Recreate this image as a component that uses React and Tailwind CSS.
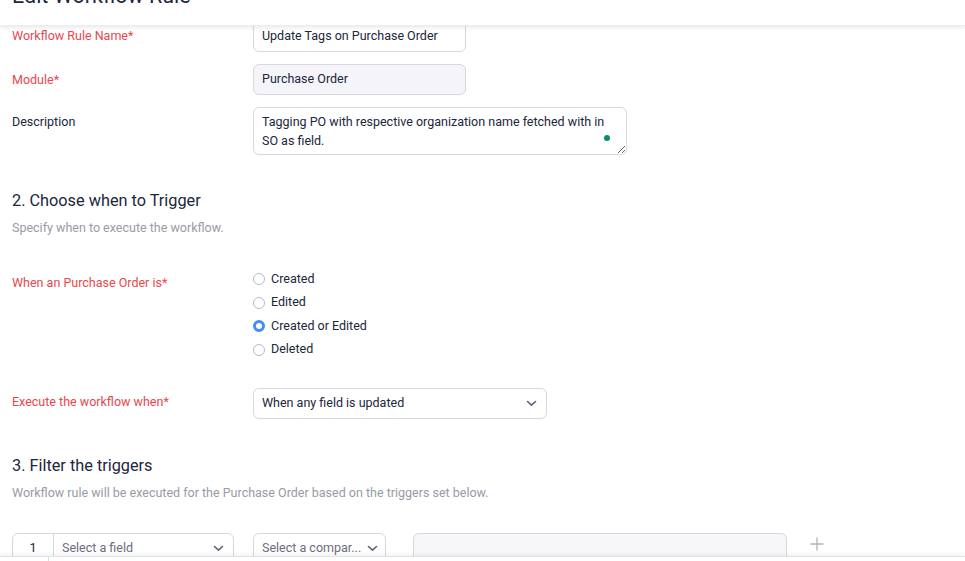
import React from 'react';

const Chevron = ({ className = '' }) => (
  <svg width="11" height="7" viewBox="0 0 11 7" className={className} fill="none">
    <path d="M1.5 1.5 L5.5 5.2 L9.5 1.5" stroke="#5f6075" strokeWidth="1.6" strokeLinecap="round" strokeLinejoin="round" />
  </svg>
);

const Radio = ({ checked, label }) => (
  <label className="flex items-center h-[23.5px] gap-[6px] text-[12.5px] text-[#21263c] whitespace-nowrap">
    {checked ? (
      <span className="w-[12px] h-[12px] rounded-full border-[3.5px] border-[#408dfb] bg-white" />
    ) : (
      <span className="w-[12px] h-[12px] rounded-full border border-[#b9b8c6] bg-white" />
    )}
    {label}
  </label>
);

const Row = ({ label, required, labelPad = 'pt-[6px]', children, className = '' }) => (
  <div className={`flex ${className}`}>
    <div className={`w-[241px] shrink-0 leading-[20px] text-[12.5px] whitespace-nowrap ${labelPad} ${required ? 'text-[#e8474f]' : 'text-[#21263c]'}`}>
      {label}
      {required && '*'}
    </div>
    {children}
  </div>
);

export default function App() {
  return (
    <div className="h-[561px] w-full overflow-hidden flex flex-col bg-white font-['Roboto','Liberation_Sans',sans-serif]">
      <div className="h-[26px] shrink-0 relative z-10 bg-white shadow-[0_2px_4px_rgba(0,0,0,0.08)] border-b border-[#ececf1] overflow-hidden px-3">
        <h1 className="mt-[-18px] text-[21.5px] leading-[28px] text-[#21263c] whitespace-nowrap">Edit Workflow Rule</h1>
      </div>

      <div className="flex-1 overflow-hidden px-3 mt-[-6px]">
        <Row label="Workflow Rule Name" required>
          <div className="w-[213px] h-[32px] border border-[#d7d6e1] rounded-md px-2 flex items-center text-[12.5px] text-[#21263c] whitespace-nowrap">
            Update Tags on Purchase Order
          </div>
        </Row>

        <Row label="Module" required className="mt-3">
          <div className="w-[213px] h-[31px] border border-[#d7d6e1] rounded-md bg-[#f5f5f9] px-2 flex items-center text-[12.5px] text-[#21263c]">
            Purchase Order
          </div>
        </Row>

        <Row label="Description" className="mt-3" labelPad="pt-[5px]">
          <div className="relative">
            <textarea
              readOnly
              defaultValue="Tagging PO with respective organization name fetched with in SO as field."
              className="block w-[374px] h-[48px] border border-[#d7d6e1] rounded-md px-2 pt-[4px] text-[12.5px] leading-[19px] text-[#21263c] outline-none resize-y overflow-hidden font-['Roboto','Liberation_Sans',sans-serif]"
            />
            <span className="absolute left-[351px] top-[28px] w-[6px] h-[6px] rounded-full bg-[#0b8a73]" />
          </div>
        </Row>

        <h2 className="mt-[36px] text-[16.3px] leading-[20px] text-[#21263c]">2. Choose when to Trigger</h2>
        <p className="mt-[9px] text-[12.5px] leading-[16px] text-[#9a9aa6]">Specify when to execute the workflow.</p>

        <Row label="When an Purchase Order is" required className="mt-[31.5px]" labelPad="pt-[5.5px]">
          <div className="flex flex-col">
            <Radio label="Created" />
            <Radio label="Edited" />
            <Radio label="Created or Edited" checked />
            <Radio label="Deleted" />
          </div>
        </Row>

        <Row label="Execute the workflow when" required className="mt-[26.5px]" labelPad="pt-[4px]">
          <div className="w-[294px] h-[31px] border border-[#d7d6e1] rounded-md pl-2 pr-[9px] flex items-center justify-between text-[12.5px] text-[#21263c]">
            When any field is updated
            <Chevron />
          </div>
        </Row>

        <h2 className="mt-[37px] text-[16.3px] leading-[20px] text-[#21263c]">3. Filter the triggers</h2>
        <p className="mt-[9px] text-[12.5px] leading-[16px] text-[#9a9aa6] whitespace-nowrap">
          Workflow rule will be executed for the Purchase Order based on the triggers set below.
        </p>

        <div className="mt-[32px] flex items-start">
          <div className="w-[222px] h-[31px] border border-[#d7d6e1] rounded-md flex text-[12.5px]">
            <div className="w-[41px] shrink-0 border-r border-[#d7d6e1] flex items-center justify-center text-[#21263c]">1</div>
            <div className="flex-1 pl-2 pr-[9px] flex items-center justify-between text-[#6c6c80]">
              Select a field
              <Chevron />
            </div>
          </div>
          <div className="ml-[19px] w-[133px] h-[31px] border border-[#d7d6e1] rounded-md pl-2 pr-[7px] flex items-center justify-between text-[12.5px] text-[#6c6c80] whitespace-nowrap">
            Select a compar...
            <Chevron />
          </div>
          <div className="ml-[27px] w-[374px] h-[31px] border border-[#d7d6e1] rounded-md bg-[#f7f7fa]" />
          <svg width="14" height="14" viewBox="0 0 14 14" className="ml-[23px] mt-[4px]">
            <path d="M7 0.5 V13.5 M0.5 7 H13.5" stroke="#b3b1c2" strokeWidth="1.3" />
          </svg>
        </div>
      </div>

      <div className="h-[5px] shrink-0 relative z-10 bg-white border-t border-[#e3e3ea] shadow-[0_-2px_4px_rgba(0,0,0,0.06)] flex">
        <div className="w-[49px] border-r border-[#dcdce4]" />
      </div>
    </div>
  );
}
